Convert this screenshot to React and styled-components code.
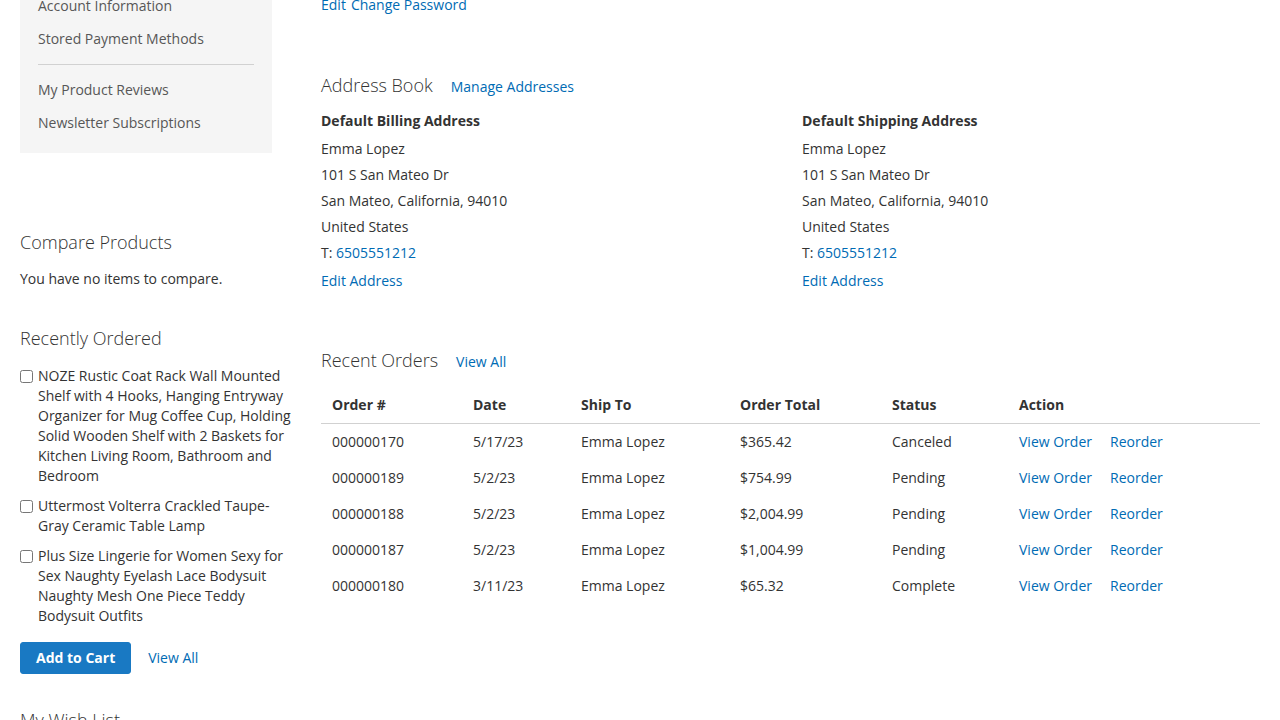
import styled, { createGlobalStyle } from "styled-components";

const GlobalStyle = createGlobalStyle`
  body {
    margin: 0;
    font-family: "Open Sans", "Helvetica Neue", Arial, sans-serif;
    font-size: 14px;
    line-height: 20px;
    color: #333;
    background: #fff;
    overflow: hidden;
  }
  a {
    color: #006bb4;
    text-decoration: none;
  }
`;

const navItems = [
  { label: "Address Book" },
  { label: "Account Information" },
  { label: "Stored Payment Methods" },
  { delimiter: true },
  { label: "My Product Reviews" },
  { label: "Newsletter Subscriptions" },
];

const recentlyOrdered = [
  "NOZE Rustic Coat Rack Wall Mounted Shelf with 4 Hooks, Hanging Entryway Organizer for Mug Coffee Cup, Holding Solid Wooden Shelf with 2 Baskets for Kitchen Living Room, Bathroom and Bedroom",
  "Uttermost Volterra Crackled Taupe-Gray Ceramic Table Lamp",
  "Plus Size Lingerie for Women Sexy for Sex Naughty Eyelash Lace Bodysuit Naughty Mesh One Piece Teddy Bodysuit Outfits",
];

const addresses = [
  { title: "Default Billing Address" },
  { title: "Default Shipping Address" },
];

const columns = [
  { label: "Order #", width: 141 },
  { label: "Date", width: 108 },
  { label: "Ship To", width: 159 },
  { label: "Order Total", width: 152 },
  { label: "Status", width: 127 },
  { label: "Action", width: 252 },
];

const orders = [
  { id: "000000170", date: "5/17/23", total: "$365.42", status: "Canceled" },
  { id: "000000189", date: "5/2/23", total: "$754.99", status: "Pending" },
  { id: "000000188", date: "5/2/23", total: "$2,004.99", status: "Pending" },
  { id: "000000187", date: "5/2/23", total: "$1,004.99", status: "Pending" },
  { id: "000000180", date: "3/11/23", total: "$65.32", status: "Complete" },
];

const App = () => {
  return (
    <>
      <GlobalStyle />
      <Page>
        <Sidebar>
          <Nav>
            {navItems.map((item, index) =>
              item.delimiter ? (
                <Delimiter key={index} />
              ) : (
                <NavItem key={index}>
                  <a href="#">{item.label}</a>
                </NavItem>
              )
            )}
          </Nav>

          <CompareBlock>
            <BlockTitle>Compare Products</BlockTitle>
            <EmptyText>You have no items to compare.</EmptyText>
          </CompareBlock>

          <ReorderBlock>
            <BlockTitle>Recently Ordered</BlockTitle>
            <ReorderList>
              {recentlyOrdered.map((name, index) => (
                <ReorderItem key={index}>
                  <Checkbox type="checkbox" />
                  <span>{name}</span>
                </ReorderItem>
              ))}
            </ReorderList>
            <ReorderActions>
              <PrimaryButton type="button">Add to Cart</PrimaryButton>
              <a href="#">View All</a>
            </ReorderActions>
          </ReorderBlock>

          <WishlistBlock>
            <BlockTitle>My Wish List</BlockTitle>
          </WishlistBlock>
        </Sidebar>

        <Main>
          <BoxActions>
            <a href="#">Edit</a>
            <a href="#">Change Password</a>
          </BoxActions>

          <AddressBlock>
            <TitleRow>
              <BlockTitle>Address Book</BlockTitle>
              <TitleLink href="#">Manage Addresses</TitleLink>
            </TitleRow>
            <AddressGrid>
              {addresses.map((box) => (
                <div key={box.title}>
                  <BoxTitle>{box.title}</BoxTitle>
                  <Address>
                    Emma Lopez
                    <br />
                    101 S San Mateo Dr
                    <br />
                    San Mateo, California, 94010
                    <br />
                    United States
                    <br />
                    T: <a href="#">6505551212</a>
                  </Address>
                  <EditLink href="#">Edit Address</EditLink>
                </div>
              ))}
            </AddressGrid>
          </AddressBlock>

          <OrdersBlock>
            <TitleRow>
              <BlockTitle>Recent Orders</BlockTitle>
              <TitleLink href="#">View All</TitleLink>
            </TitleRow>
            <OrdersTable>
              <thead>
                <tr>
                  {columns.map((col) => (
                    <Th key={col.label} $width={col.width}>
                      {col.label}
                    </Th>
                  ))}
                </tr>
              </thead>
              <tbody>
                {orders.map((order) => (
                  <tr key={order.id}>
                    <Td>{order.id}</Td>
                    <Td>{order.date}</Td>
                    <Td>Emma Lopez</Td>
                    <Td>{order.total}</Td>
                    <Td>{order.status}</Td>
                    <Td>
                      <ActionLink href="#">View Order</ActionLink>
                      <ActionLink href="#">Reorder</ActionLink>
                    </Td>
                  </tr>
                ))}
              </tbody>
            </OrdersTable>
          </OrdersBlock>
        </Main>
      </Page>
    </>
  );
};

export default App;

// page is scrolled down, so the top of the layout sits above the viewport
const Page = styled.div`
  display: flex;
  align-items: flex-start;
  padding: 0 20px;
  margin-top: -60px;
`;

const Sidebar = styled.aside`
  width: 278px;
  flex-shrink: 0;
`;

const Nav = styled.ul`
  width: 252px;
  margin: 0;
  padding: 15px 0;
  list-style: none;
  background: #f5f5f5;
`;

const NavItem = styled.li`
  margin: 3px 0 0;

  a {
    display: block;
    padding: 5px 18px 5px 15px;
    border-left: 3px solid transparent;
    color: #575757;
  }
`;

const Delimiter = styled.li`
  display: block;
  margin: 10px 18px;
  border-top: 1px solid #d1d1d1;
`;

const BlockTitle = styled.strong`
  display: block;
  font-size: 18px;
  line-height: 24px;
  font-weight: 300;
  color: #333;
`;

const CompareBlock = styled.div`
  margin-top: 77px;
`;

const EmptyText = styled.p`
  margin: 15px 0 0;
`;

const ReorderBlock = styled.div`
  margin-top: 37px;
`;

const ReorderList = styled.ol`
  margin: 16px 0 0;
  padding: 0;
  list-style: none;
  display: flex;
  flex-direction: column;
  gap: 10px;
`;

const ReorderItem = styled.li`
  display: flex;
  align-items: flex-start;
`;

const Checkbox = styled.input`
  width: 13px;
  height: 13px;
  margin: 4px 5px 0 0;
  flex-shrink: 0;
`;

const ReorderActions = styled.div`
  display: flex;
  align-items: center;
  gap: 17px;
  margin-top: 16px;
`;

const PrimaryButton = styled.button`
  background: #1979c3;
  border: 1px solid #1979c3;
  border-radius: 3px;
  color: #fff;
  font-family: inherit;
  font-size: 14px;
  font-weight: 700;
  line-height: 16px;
  padding: 7px 15px;
  cursor: pointer;
`;

const WishlistBlock = styled.div`
  margin-top: 34px;
  padding-bottom: 40px;
`;

const Main = styled.main`
  flex: 1;
  min-width: 0;
  margin-left: 23px;
  padding-top: 55px;
`;

const BoxActions = styled.div`
  display: flex;
  gap: 5px;
`;

const AddressBlock = styled.section`
  margin-top: 58px;
`;

const TitleRow = styled.div`
  display: flex;
  align-items: baseline;
`;

const TitleLink = styled.a`
  margin-left: 18px;
`;

const AddressGrid = styled.div`
  display: grid;
  grid-template-columns: 481px 1fr;
  margin-top: 14px;
`;

const BoxTitle = styled.strong`
  display: block;
  font-weight: 700;
  margin-bottom: 5px;
`;

const Address = styled.address`
  font-style: normal;
  line-height: 26px;
`;

const EditLink = styled.a`
  display: inline-block;
  margin-top: 5px;
`;

const OrdersBlock = styled.section`
  margin-top: 57px;
`;

const OrdersTable = styled.table`
  width: 100%;
  margin-top: 12px;
  border-collapse: collapse;
  table-layout: fixed;
`;

const Th = styled.th`
  box-sizing: border-box;
  width: ${(props) => props.$width}px;
  padding: 11px 10px 8px 11px;
  text-align: left;
  font-weight: 700;
  border-bottom: 1px solid #d1d1d1;
`;

const Td = styled.td`
  padding: 8px 10px 8px 11px;
  vertical-align: top;
`;

const ActionLink = styled.a`
  margin-right: 18px;
`;
